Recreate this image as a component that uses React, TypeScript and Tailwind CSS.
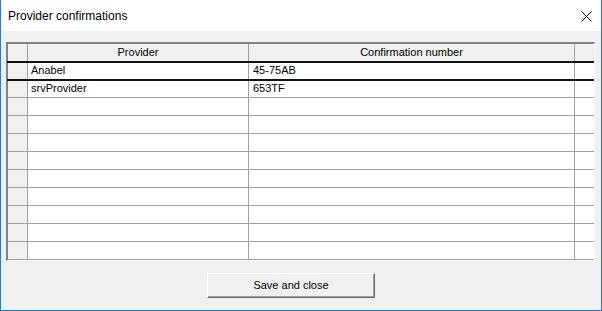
import React from "react";

const rows: [string, string][] = [
  ["Anabel", "45-75AB"],
  ["srvProvider", "653TF"],
  ["", ""],
  ["", ""],
  ["", ""],
  ["", ""],
  ["", ""],
  ["", ""],
  ["", ""],
  ["", ""],
  ["", ""],
];

export default function App() {
  return (
    <div
      className="w-[602px] h-[311px] border-x border-b border-[#1a80d6] bg-[#f0f0f0] flex flex-col text-black"
      style={{ fontFamily: '"Liberation Sans", Arial, sans-serif' }}
    >
      <div className="h-[31px] bg-white flex items-center justify-between pl-[7px] pr-[9px] shrink-0">
        <span className="text-[12px]">Provider confirmations</span>
        <svg width="11" height="11" viewBox="0 0 11 11" className="mt-[1px]">
          <path d="M0.5 0.5 L10.5 10.5 M10.5 0.5 L0.5 10.5" stroke="#000" strokeWidth="1" fill="none" />
        </svg>
      </div>
      <div className="flex-1 flex flex-col pt-[11px] pl-[5px] pr-[6px]">
        <div className="border-l-2 border-t-2 border-l-[#828282] border-t-[#828282] border-r border-b border-r-white border-b-white flex flex-col">
          {/* header */}
          <div className="flex h-[18px] border-b border-[#a0a0a0] bg-[#f0f0f0] text-[11px]">
            <div className="w-[20px] border-r border-[#a0a0a0]" />
            <div className="w-[221px] border-r border-[#a0a0a0] flex items-center justify-center">Provider</div>
            <div className="w-[326px] border-r border-[#a0a0a0] flex items-center justify-center">Confirmation number</div>
            <div className="w-[19px]" />
          </div>
          {rows.map(([p, c], i) => (
            <div key={i} className="relative flex h-[18px] border-b border-[#a0a0a0] text-[11px]">
              <div className="w-[20px] border-r border-[#a0a0a0] bg-[#f0f0f0]" />
              <div className="w-[221px] border-r border-[#a0a0a0] bg-white flex items-center pl-[3px]">{p}</div>
              <div className="w-[326px] border-r border-[#a0a0a0] bg-white flex items-center pl-[4px]">{c}</div>
              <div className="w-[19px] bg-white" />
              {i === 0 && (
                <>
                  <div className="absolute z-10 left-[-1px] right-0 top-[-1px] h-[2px] bg-[#111]" />
                  <div className="absolute z-10 left-[-1px] right-0 bottom-[-2px] h-[2px] bg-[#111]" />
                </>
              )}
            </div>
          ))}
        </div>
        <div className="flex mt-[12px] pl-[201px]">
          <button className="w-[168px] h-[25px] bg-[#f0f0f0] border-t border-l border-t-white border-l-white border-b border-r border-b-[#696969] border-r-[#696969] shadow-[inset_-1px_-1px_0_#a0a0a0] text-[11px] flex items-center justify-center">
            Save and close
          </button>
        </div>
      </div>
    </div>
  );
}
